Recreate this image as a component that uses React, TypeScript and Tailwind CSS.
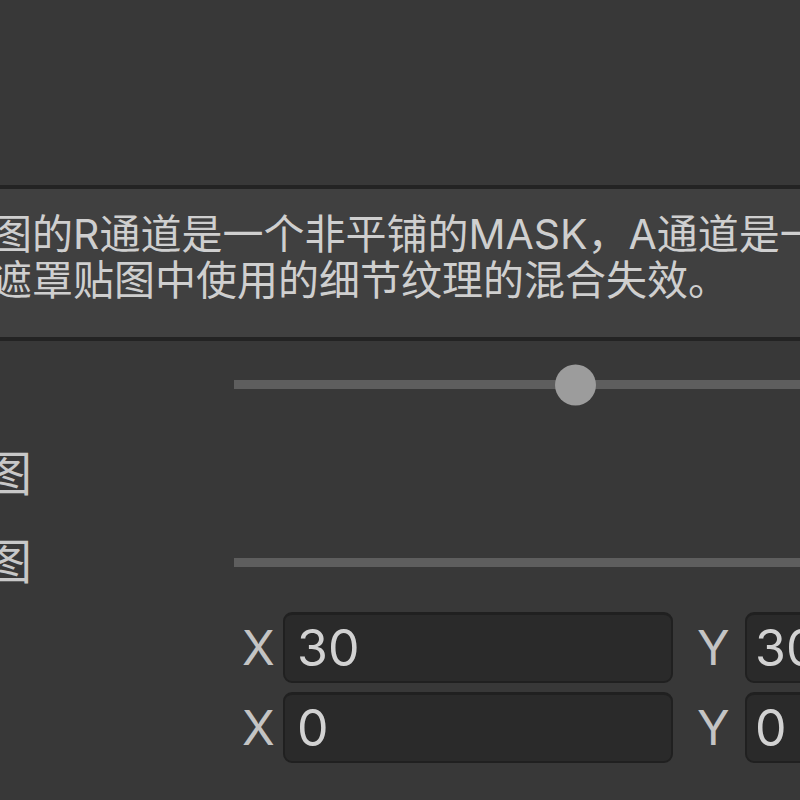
import React from 'react'

const font = "font-['Inter','Noto_Sans_CJK_SC',sans-serif]"

function Track({ thumb }: { thumb?: number }) {
  return (
    <div className="relative h-[9px] w-[600px] shrink-0 bg-[#5e5e5e]">
      {thumb !== undefined && (
        <div
          className="absolute top-1/2 h-[41px] w-[41px] -translate-y-1/2 rounded-full bg-[#9c9c9c]"
          style={{ left: thumb }}
        />
      )}
    </div>
  )
}

function Label({ text }: { text: string }) {
  return (
    <div className="flex w-[32px] justify-end whitespace-nowrap text-[48px] leading-none text-[#c8c8c8]">
      {text}
    </div>
  )
}

function VectorRow({ x, y }: { x: string; y: string }) {
  return (
    <div className="flex h-[71px] shrink-0 items-center">
      <div className="w-[234px] shrink-0" />
      <div className="w-[49px] shrink-0 pl-[8px] text-[48px] leading-none text-[#c4c4c4]">X</div>
      <div className="flex h-full w-[390px] shrink-0 items-center rounded-[9px] border-[2px] border-t-[3px] border-[#202020] bg-[#2a2a2a] pl-[12px] text-[50px] text-[#d2d2d2]">
        {x}
      </div>
      <div className="w-[72px] shrink-0 pl-[24px] text-[48px] leading-none text-[#c4c4c4]">Y</div>
      <div className="flex h-full w-[390px] shrink-0 items-center rounded-[9px] border-[2px] border-t-[3px] border-[#202020] bg-[#2a2a2a] pl-[8px] text-[50px] text-[#d2d2d2]">
        {y}
      </div>
    </div>
  )
}

export default function App() {
  return (
    <div className={`flex h-[800px] w-[800px] flex-col overflow-hidden bg-[#383838] ${font}`}>
      <div className="h-[185px] shrink-0" />

      <div className="-mx-[20px] h-[156px] shrink-0 rounded-[8px] border-y-[4px] border-[#232323] bg-[#404040] pl-[11px] pt-[22px]">
        <div className="whitespace-nowrap text-[41px] leading-[46px] text-[#cfcfcf]">
          图的R通道是一个非平铺的MASK，A通道是一个平铺的MASK
        </div>
        <div className="whitespace-nowrap text-[41px] leading-[46px] text-[#cfcfcf]">
          遮罩贴图中使用的细节纹理的混合失效。
        </div>
      </div>

      <div className="flex h-[87px] shrink-0 items-center">
        <div className="w-[234px] shrink-0" />
        <Track thumb={321} />
      </div>

      <div className="flex h-[92px] shrink-0 items-center">
        <Label text="细节贴图" />
      </div>

      <div className="flex h-[84px] shrink-0 items-center">
        <div className="w-[234px] shrink-0">
          <Label text="遮罩贴图" />
        </div>
        <Track />
      </div>

      <div className="flex shrink-0 flex-col gap-[9px] pt-[8px]">
        <VectorRow x="30" y="30" />
        <VectorRow x="0" y="0" />
      </div>
    </div>
  )
}
